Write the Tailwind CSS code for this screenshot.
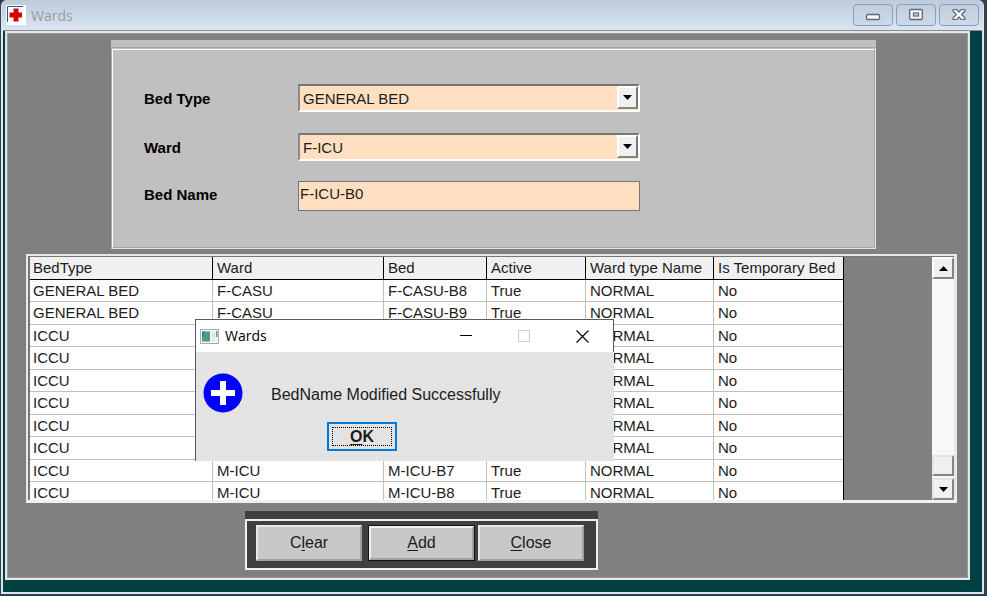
<!DOCTYPE html>
<html lang="en">
<head>
<meta charset="utf-8">
<meta name="viewport" content="width=device-width, initial-scale=1">
<title>Wards</title>
<script src="https://cdn.jsdelivr.net/npm/@tailwindcss/browser@4"></script>
</head>
<body class="bg-[#33414d] font-['Liberation_Sans',Arial,sans-serif] text-[15px] text-[#1c1c1c]">
<div class="relative flex h-screen flex-col pb-[2px] pr-[3px] pl-px">
  <div class="flex min-h-0 flex-1 flex-col rounded-t-md border-x-2 border-b-2 border-[#dbe6f2] bg-[#dbe6f2]">
    <header class="-mx-px flex h-[30px] shrink-0 items-center justify-between rounded-t-md bg-linear-to-b from-[#bccada] to-[#d9e5f2] pr-1 pl-1">
      <div class="flex items-center gap-[5px]">
        <svg class="size-5" viewBox="0 0 20 20" aria-hidden="true">
          <rect width="20" height="20" fill="#fff"/>
          <path d="M1.5 17V1.5H17" fill="none" stroke="#31527f"/>
          <path d="M7.5 3.500h5v4H16v5h-3.500v4h-5v-4H3.500v-5h4z" fill="#d40000"/>
        </svg>
        <h1 class="pt-0.5 font-['Open_Sans','Noto_Sans',sans-serif] text-[14px] leading-5 text-[#989ca1]">Wards</h1>
      </div>
      <div class="flex gap-[3px]">
        <button type="button" aria-label="Minimize" class="flex h-[22px] w-10 items-center justify-center rounded-sm border border-[#8d9cb8] bg-linear-to-b from-[#c0cede] to-[#ccd9e8]">
          <svg width="16" height="14" viewBox="0 0 16 14"><rect x="1.500" y="6.500" width="13" height="5" rx="1" fill="#f6f6f6" stroke="#66677a" stroke-width="1.300"/></svg>
        </button>
        <button type="button" aria-label="Maximize" class="flex h-[22px] w-10 items-center justify-center rounded-sm border border-[#8d9cb8] bg-linear-to-b from-[#c0cede] to-[#ccd9e8]">
          <svg width="16" height="14" viewBox="0 0 16 14"><rect x="1.700" y="1.500" width="12.600" height="10" rx="1" fill="#f6f6f6" stroke="#66677a" stroke-width="1.300"/><rect x="5.500" y="5" width="5" height="3" fill="#c5d2e2" stroke="#66677a" stroke-width="1.200"/></svg>
        </button>
        <button type="button" aria-label="Close" class="flex h-[22px] w-10 items-center justify-center rounded-sm border border-[#8d9cb8] bg-linear-to-b from-[#c0cede] to-[#ccd9e8]">
          <svg width="16" height="14" viewBox="0 0 16 14"><path d="M2 1.500h3.800L8 4l2.200-2.500H14V3l-3.400 3.500L14 10v1.500h-3.800L8 9l-2.200 2.500H2V10l3.400-3.500L2 3z" fill="#f6f6f6" stroke="#66677a" stroke-width="1.200" stroke-linejoin="round"/></svg>
        </button>
      </div>
    </header>

    <div class="flex min-h-0 flex-1 flex-col border-t border-[#8d8d8d] bg-[#004040] pr-3 pb-3">
      <main class="flex min-h-0 flex-1 flex-col border-2 border-[#e6e6e6] border-l-[#dfe3e3] bg-[#808080] ml-0.5 outline outline-[#9a9a9a] -outline-offset-3">
        <form class="mt-[7px] mr-[92px] ml-[104px] shrink-0">
          <div class="h-2 border-b border-[#a4a4a4] bg-[#c0c0c0]"></div>
          <div class="border border-[#e4e4e4] border-t-[#c0c0c0] border-l-[#a8a8a8]">
            <div class="grid grid-cols-[154px_342px] border border-r-[#a8a8a8] border-b-[#a8a8a8] border-t-white border-l-white bg-[#c0c0c0] pt-[34px] pb-9 pl-[31px]">
              <label for="bedtype" class="h-[49px] pt-[6px] font-bold leading-[18px] text-black">Bed Type</label>
              <div class="relative h-7 border-2 border-t-[#767676] border-l-[#8a8a8a] border-r-white border-b-white">
                <select id="bedtype" class="h-full w-full appearance-none bg-[#ffdfc0] pt-px pl-[3px] leading-5">
                  <option>GENERAL BED</option><option>ICCU</option>
                </select>
                <span class="pointer-events-none absolute top-0 right-0 bottom-px flex w-[21px] items-center justify-center border-2 border-t-white border-l-white border-r-[#767676] border-b-[#858585] bg-[#f0f0f0]">
                  <svg width="9" height="5" viewBox="0 0 9 5"><path d="M0 0h9L4.500 5z"/></svg>
                </span>
              </div>
              <label for="ward" class="h-12 pt-[6px] font-bold leading-[18px] text-black">Ward</label>
              <div class="relative h-7 border-2 border-t-[#767676] border-l-[#8a8a8a] border-r-white border-b-white">
                <select id="ward" class="h-full w-full appearance-none bg-[#ffdfc0] pt-px pl-[3px] leading-5">
                  <option>F-ICU</option><option>F-CASU</option><option>M-ICU</option>
                </select>
                <span class="pointer-events-none absolute top-0 right-0 bottom-px flex w-[21px] items-center justify-center border-2 border-t-white border-l-white border-r-[#767676] border-b-[#858585] bg-[#f0f0f0]">
                  <svg width="9" height="5" viewBox="0 0 9 5"><path d="M0 0h9L4.500 5z"/></svg>
                </span>
              </div>
              <label for="bedname" class="pt-[5px] font-bold leading-[18px] text-black">Bed Name</label>
              <input id="bedname" type="text" value="F-ICU-B0" class="h-[30px] border border-[#777] bg-[#ffdfc0] pt-0 pb-[5px] pl-px outline-none">
            </div>
          </div>
        </form>

        <section aria-label="Beds" class="mt-[5px] mr-[11px] ml-[19px] flex min-h-0 flex-1 border-2 border-[#e9e9e9] border-b-[3px] border-b-[#f0f0f0] border-r-[3px]">
          <div class="flex min-h-0 flex-1 overflow-hidden border-t border-l-2 border-[#777]">
            <div class="min-w-0 flex-1 overflow-hidden">
              <table class="w-[813px] table-fixed border-separate border-spacing-0 border-r border-black bg-white text-left leading-[18px] [&_td]:border-r [&_td]:border-b [&_td]:border-[#c0c0c0] [&_td]:py-0 [&_td]:pr-0 [&_td]:pl-1 [&_td:first-child]:pl-[3px] [&_td:last-child]:border-r-0 [&_th]:border-r [&_th]:border-b [&_th]:border-black [&_th]:bg-[#f0f0f0] [&_th]:py-0 [&_th]:pr-0 [&_th]:pl-1 [&_th:first-child]:pl-[3px] [&_th]:font-normal [&_th]:whitespace-nowrap [&_th:last-child]:border-r-0">
                <colgroup><col class="w-[183px]"><col class="w-[171px]"><col class="w-[103px]"><col class="w-[99px]"><col class="w-[128px]"><col class="w-[129px]"></colgroup>
                <thead><tr class="h-[23px]"><th>BedType</th><th>Ward</th><th>Bed</th><th>Active</th><th>Ward type Name</th><th>Is Temporary Bed</th></tr></thead>
                <tbody class="[&>tr:nth-child(odd)]:h-[22px] [&>tr:nth-child(even)]:h-[23px]">
                  <tr><td>GENERAL BED</td><td>F-CASU</td><td>F-CASU-B8</td><td>True</td><td>NORMAL</td><td>No</td></tr>
                  <tr><td>GENERAL BED</td><td>F-CASU</td><td>F-CASU-B9</td><td>True</td><td>NORMAL</td><td>No</td></tr>
                  <tr><td>ICCU</td><td></td><td></td><td></td><td>NORMAL</td><td>No</td></tr>
                  <tr><td>ICCU</td><td></td><td></td><td></td><td>NORMAL</td><td>No</td></tr>
                  <tr><td>ICCU</td><td></td><td></td><td></td><td>NORMAL</td><td>No</td></tr>
                  <tr><td>ICCU</td><td></td><td></td><td></td><td>NORMAL</td><td>No</td></tr>
                  <tr><td>ICCU</td><td></td><td></td><td></td><td>NORMAL</td><td>No</td></tr>
                  <tr><td>ICCU</td><td></td><td></td><td></td><td>NORMAL</td><td>No</td></tr>
                  <tr><td>ICCU</td><td>M-ICU</td><td>M-ICU-B7</td><td>True</td><td>NORMAL</td><td>No</td></tr>
                  <tr><td>ICCU</td><td>M-ICU</td><td>M-ICU-B8</td><td>True</td><td>NORMAL</td><td>No</td></tr>
                </tbody>
              </table>
            </div>
            <div class="flex w-[22px] shrink-0 flex-col bg-[#f8f8f8]">
              <button type="button" aria-label="Scroll up" class="flex h-[22px] items-center justify-center border-2 border-t-white border-l-white border-r-[#858585] border-b-[#858585] bg-[#f0f0f0]"><svg width="9" height="5" viewBox="0 0 9 5"><path d="M0 5h9L4.500 0z"/></svg></button>
              <div class="flex-1"></div>
              <div class="mb-[2px] h-[21px] border-2 border-t-[#e4e4e4] border-l-[#e4e4e4] border-r-[#858585] border-b-[#858585] bg-[#f0f0f0]"></div>
              <button type="button" aria-label="Scroll down" class="flex h-[22px] items-center justify-center border-2 border-t-[#e4e4e4] border-l-[#e4e4e4] border-r-[#858585] border-b-[#858585] bg-[#f0f0f0]"><svg width="9" height="5" viewBox="0 0 9 5"><path d="M0 0h9L4.500 5z"/></svg></button>
            </div>
          </div>
        </section>

        <div class="mt-2 mb-2 ml-[238px] w-[353px] shrink-0 text-[16px]">
          <div class="h-2 bg-[#404040]"></div>
          <div class="flex h-[51px] items-start border-2 border-[#f0f0f0] bg-[#404040] pt-1 pl-[9px]">
            <button type="button" class="h-9 w-[106px] border-2 border-t-[#e8e8e8] border-l-[#e8e8e8] border-r-[#a0a0a0] border-b-[#a0a0a0] bg-[#c8c8c8]">C<u class="underline-offset-2">l</u>ear</button>
            <button type="button" class="ml-1.5 h-9 w-[107px] border border-[#1c0c0c] bg-[#c8c8c8]"><span class="flex h-full items-center justify-center border-2 border-t-[#f0f0f0] border-l-[#f0f0f0] border-r-[#a0a0a0] border-b-[#a0a0a0]"><span><u class="underline-offset-2">A</u>dd</span></span></button>
            <button type="button" class="ml-[3px] h-9 w-[106px] border-2 border-t-[#e8e8e8] border-l-[#e8e8e8] border-r-[#a0a0a0] border-b-[#a0a0a0] bg-[#c8c8c8]"><u class="underline-offset-2">C</u>lose</button>
          </div>
        </div>
      </main>
    </div>
  </div>

  <div role="dialog" aria-labelledby="dialog-title" class="absolute top-[319px] left-[195px] w-[419px] border-t border-l border-[#5a5a5a] bg-[#e3e3e3] text-[16px]">
    <div class="flex h-8 items-center justify-between border-r border-[#5a5a5a] bg-white pr-6 pl-1">
      <div class="flex items-center gap-1.5">
        <svg width="19" height="15" viewBox="0 0 19 15" aria-hidden="true"><rect x=".5" y=".5" width="18" height="14" fill="#f4f4f4" stroke="#a5adb8"/><path d="M2 2.500h8v10H2z" fill="#4d9a83"/><path d="M2 2.500h3L2 9z" fill="#4177a5"/><path d="M12 3h3v9h-3z" fill="#e2e2e2"/><path d="M16 2h1.500v6H16z" fill="#48a78c"/></svg>
        <h2 id="dialog-title" class="font-['Open_Sans','Noto_Sans',sans-serif] text-[14px] leading-5 text-black">Wards</h2>
      </div>
      <div class="flex items-center gap-[46px]">
        <button type="button" aria-label="Minimize"><svg width="12" height="12" viewBox="0 0 12 12"><path d="M0 5.500h12" stroke="#000"/></svg></button>
        <button type="button" aria-label="Maximize" disabled><svg width="12" height="12" viewBox="0 0 12 12"><path d="M.5.5h11v11H.5z" fill="none" stroke="#ccc"/></svg></button>
        <button type="button" aria-label="Close"><svg width="13" height="13" viewBox="0 0 13 13"><path d="M.5.5l12 12M12.500.5l-12 12" stroke="#000" stroke-width="1.100"/></svg></button>
      </div>
    </div>
    <div class="flex items-start gap-7 pt-[21px] pl-[7px]">
      <svg width="40" height="40" viewBox="0 0 40 40" aria-hidden="true"><circle cx="20" cy="20" r="19.500" fill="#0000fe"/><path d="M17 8h6v9h9v6h-9v9h-6v-9H8v-6h9z" fill="#fff"/></svg>
      <p class="pt-3 leading-5">BedName Modified Successfully</p>
    </div>
    <div class="-ml-1 pt-[9px] pr-4 pb-2.5 pl-[135px]">
      <button type="button" class="block h-[29px] w-[70px] border-2 border-[#0078d7] p-[3px] font-bold"><span class="flex h-full items-center justify-center border border-dotted border-black"><span><u class="underline-offset-2">O</u>K</span></span></button>
    </div>
  </div>
</div>
</body>
</html>
